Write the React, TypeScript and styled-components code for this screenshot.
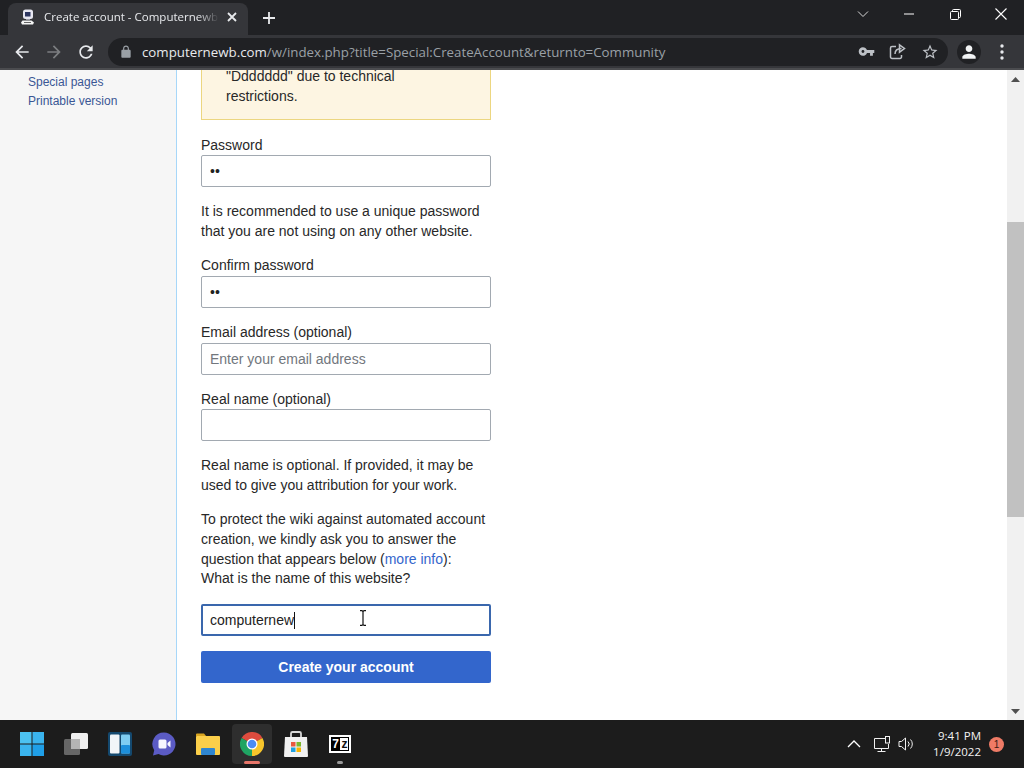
import React from 'react';
import styled, { createGlobalStyle } from 'styled-components';

const GlobalStyle = createGlobalStyle`
  html, body { margin: 0; padding: 0; height: 100%; overflow: hidden; }
  body { font-family: "Liberation Sans", Arial, sans-serif; }
  #root { height: 100%; }
`;

const Screen = styled.div`
  position: relative;
  width: 1024px;
  height: 768px;
  display: flex;
  flex-direction: column;
  overflow: hidden;
`;

/* browser chrome */
const TabStrip = styled.div`
  height: 35px;
  flex: none;
  background: #202124;
  display: flex;
  align-items: flex-end;
  padding-left: 8px;
  color: #fff;
`;

const Tab = styled.div`
  width: 240px;
  height: 32px;
  background: #35363a;
  border-radius: 8px 8px 0 0;
  display: flex;
  align-items: center;
  padding: 0 11px 5px 12px;
  box-sizing: border-box;
  gap: 8px;
`;

const TabTitle = styled.div`
  flex: 1;
  font-family: "Open Sans", sans-serif;
  font-size: 11.5px;
  color: #e8eaed;
  white-space: nowrap;
  overflow: hidden;
  mask-image: linear-gradient(to right, #000 88%, transparent);
`;

const NewTab = styled.div`
  width: 42px;
  display: flex;
  justify-content: center;
  align-self: center;
`;

const WindowControls = styled.div`
  margin-left: auto;
  align-self: flex-start;
  display: flex;
  align-items: center;
  height: 28px;
`;

const WinBtn = styled.div`
  width: 46px;
  height: 28px;
  display: flex;
  align-items: center;
  justify-content: center;
`;

const Toolbar = styled.div`
  height: 35px;
  flex: none;
  box-sizing: border-box;
  background: #35363a;
  border-bottom: 2px solid #4b4c4f;
  display: flex;
  align-items: center;
  padding: 0 20px 0 6px;
`;

const NavBtn = styled.div`
  width: 32px;
  display: flex;
  justify-content: center;
`;

const Omnibox = styled.div`
  flex: 1;
  height: 28px;
  margin: 0 9px 0 6px;
  background: #202124;
  border-radius: 14px;
  display: flex;
  align-items: center;
  padding: 0 6px 0 11px;
  gap: 9px;
`;

const Url = styled.div`
  flex: 1;
  font-family: "Open Sans", sans-serif;
  font-size: 13.3px;
  color: #9aa0a6;
  white-space: nowrap;
  b { font-weight: 400; color: #e8eaed; }
`;

const OmniIcons = styled.div`
  display: flex;
  align-items: center;
  gap: 14px;
  padding-right: 3px;
`;

const Avatar = styled.div`
  width: 24px;
  height: 24px;
  border-radius: 50%;
  background: #202124;
  display: flex;
  align-items: center;
  justify-content: center;
  margin-right: 19px;
`;

/* page */
const Viewport = styled.div`
  flex: 1;
  min-height: 0;
  display: flex;
  background: #fff;
`;

const Sidebar = styled.nav`
  width: 148px;
  flex: none;
  background: #f6f6f6;
  border-right: 1px solid #a7d7f9;
  padding: 3px 0 0 28px;
`;

const SideLink = styled.a`
  display: block;
  font-size: 12px;
  line-height: 19px;
  color: #3a5795;
`;

const Main = styled.main`
  flex: 1;
  padding-left: 24px;
`;

const Form = styled.div`
  width: 290px;
  font-size: 14px;
  line-height: 20px;
  color: #282828;
`;

const WarningBox = styled.div`
  height: 50px;
  box-sizing: border-box;
  background: #fdf5e2;
  border: 1px solid #ecd680;
  border-top: none;
  padding: 0 24px 13px;
  display: flex;
  align-items: flex-end;
  overflow: hidden;
`;

const Label = styled.div<{ $top?: number; $gap?: number }>`
  margin-top: ${p => p.$top ?? 14}px;
  margin-bottom: ${p => p.$gap ?? 0}px;
  height: 20px;
`;

const TextInput = styled.input`
  display: block;
  width: 100%;
  height: 32px;
  box-sizing: border-box;
  padding: 0 8px;
  border: 1px solid #a2a9b1;
  border-radius: 2px;
  background: #fff;
  font: 14px "Liberation Sans", Arial, sans-serif;
  color: #222;
  outline: none;
  &::placeholder { color: #72777d; opacity: 1; }
`;

const FocusedInput = styled.div`
  height: 32px;
  margin-top: 16px;
  box-sizing: border-box;
  padding: 0 7px;
  border: 2px solid #3a67ad;
  border-radius: 2px;
  display: flex;
  align-items: center;
  color: #222;
  span { border-right: 1px solid #111; height: 17px; line-height: 17px; }
`;

const Hint = styled.p`
  margin: 14px 0 0;
`;

const Question = styled.div`
  margin-top: -1px;
`;

const InlineLink = styled.a`
  color: #36c;
`;

const SubmitButton = styled.button`
  display: block;
  width: 100%;
  height: 32px;
  margin-top: 15px;
  border: none;
  border-radius: 2px;
  background: #3366cc;
  color: #fff;
  font: bold 14px "Liberation Sans", Arial, sans-serif;
`;

const Scrollbar = styled.div`
  width: 17px;
  flex: none;
  background: #f1f1f1;
  display: flex;
  flex-direction: column;
  align-items: center;
  justify-content: space-between;
  padding: 7px 0 6px;
  box-sizing: border-box;
`;

const Thumb = styled.div`
  position: absolute;
  top: 222px;
  right: 0;
  width: 17px;
  height: 295px;
  background: #c1c1c1;
`;

const Cursor = styled.svg`
  position: absolute;
  left: 358px;
  top: 610px;
`;

/* taskbar */
const Taskbar = styled.footer`
  height: 48px;
  flex: none;
  background: #1c1c1c;
  display: flex;
  align-items: center;
  padding: 0 20px 0 12px;
  gap: 4px;
`;

const TaskItem = styled.div<{ $active?: boolean; $dot?: string }>`
  position: relative;
  width: 40px;
  height: 40px;
  border-radius: 4px;
  background: ${p => (p.$active ? '#2e2e2e' : 'transparent')};
  display: flex;
  align-items: center;
  justify-content: center;
  &::after {
    content: '';
    display: ${p => (p.$dot ? 'block' : 'none')};
    position: absolute;
    bottom: 0;
    left: 50%;
    transform: translateX(-50%);
    width: ${p => (p.$active ? '16px' : '6px')};
    height: 3px;
    border-radius: 2px;
    background: ${p => p.$dot};
  }
`;

const Tray = styled.div`
  margin-left: auto;
  display: flex;
  align-items: center;
  color: #fff;
`;

const TrayIcons = styled.div`
  display: flex;
  align-items: center;
  gap: 7px;
  margin-right: 19px;
`;

const TrayChevron = styled.svg`
  margin-right: 6px;
`;

const Clock = styled.div`
  font-family: "Open Sans", sans-serif;
  font-size: 11.5px;
  line-height: 16px;
  text-align: right;
  color: #f2f2f2;
`;

const Badge = styled.div`
  width: 15px;
  height: 15px;
  margin-left: 8px;
  border-radius: 50%;
  background: #ef7b66;
  color: #3a1a12;
  font-size: 10px;
  line-height: 15px;
  text-align: center;
`;

const SevenZip = styled.div`
  width: 22px;
  height: 18px;
  box-sizing: border-box;
  background: #fff;
  border: 2px solid #fff;
  outline: 1px solid #000;
  outline-offset: -3px;
  color: #111;
  font: bold 12px/14px "Liberation Sans", Arial, sans-serif;
  display: flex;
  span { flex: 1; text-align: center; }
  span:first-child { background: #000; color: #fff; }
`;

const Glyph = ({ d, size = 20, color = '#e8eaed' }: { d: string; size?: number; color?: string }) => (
  <svg width={size} height={size} viewBox="0 0 24 24" fill={color}><path d={d} /></svg>
);

const icons = {
  back: 'M20 11H7.83l5.59-5.59L12 4l-8 8 8 8 1.41-1.41L7.83 13H20v-2z',
  forward: 'M12 4l-1.41 1.41L16.17 11H4v2h12.17l-5.58 5.59L12 20l8-8z',
  reload: 'M17.65 6.35C16.2 4.9 14.21 4 12 4c-4.42 0-7.99 3.58-7.99 8s3.57 8 7.99 8c3.73 0 6.84-2.55 7.73-6h-2.08c-.82 2.33-3.04 4-5.65 4-3.31 0-6-2.69-6-6s2.69-6 6-6c1.66 0 3.14.69 4.22 1.78L13 11h7V4l-2.35 2.35z',
  lock: 'M18 8h-1V6c0-2.76-2.24-5-5-5S7 3.24 7 6v2H6c-1.1 0-2 .9-2 2v10c0 1.1.9 2 2 2h12c1.1 0 2-.9 2-2V10c0-1.1-.9-2-2-2zM9 6c0-1.66 1.34-3 3-3s3 1.34 3 3v2H9V6z',
  key: 'M12.65 10C11.83 7.67 9.61 6 7 6c-3.31 0-6 2.69-6 6s2.69 6 6 6c2.61 0 4.83-1.67 5.65-4H17v4h4v-4h2v-4H12.65zM7 14c-1.1 0-2-.9-2-2s.9-2 2-2 2 .9 2 2-.9 2-2 2z',
  star: 'M22 9.24l-7.19-.62L12 2 9.19 8.63 2 9.24l5.46 4.73L5.82 21 12 17.27 18.18 21l-1.63-7.03L22 9.24zM12 15.4l-3.76 2.27 1-4.28-3.32-2.88 4.38-.38L12 6.1l1.71 4.04 4.38.38-3.32 2.88 1 4.28L12 15.4z',
  person: 'M12 12c2.21 0 4-1.79 4-4s-1.79-4-4-4-4 1.79-4 4 1.79 4 4 4zm0 2c-2.67 0-8 1.34-8 4v2h16v-2c0-2.66-5.33-4-8-4z',
};

const Favicon = () => (
  <svg width="16" height="16" viewBox="0 0 16 16">
    <rect x="3" y="0.500" width="10" height="9.500" rx="2.500" fill="#e6e6f0" />
    <rect x="5" y="3" width="5.500" height="4.500" fill="#2c3560" />
    <path d="M6 10h4v1H6z" fill="#9a9aa5" />
    <path d="M2.500 11.500h9l2.500 2-1 2H2l-1-2z" fill="#f5f5f5" />
    <path d="M4 13h7v1H4z" fill="#666" />
  </svg>
);

const Share = () => (
  <svg width="18" height="18" viewBox="0 0 18 18" fill="none" stroke="#bdc1c6" strokeWidth="1.500">
    <path d="M7 3.500H3a1.500 1.500 0 0 0-1.500 1.500v9A1.500 1.500 0 0 0 3 15.500h8a1.500 1.500 0 0 0 1.500-1.500v-2" />
    <path d="M6 11c0-4 3-5.500 6.500-5.500M10.500 1.800l5 3.700-5 3.700z" />
  </svg>
);

const Dots = () => (
  <svg width="4" height="16" viewBox="0 0 4 16" fill="#e8eaed">
    <circle cx="2" cy="2" r="1.700" /><circle cx="2" cy="8" r="1.700" /><circle cx="2" cy="14" r="1.700" />
  </svg>
);

const StartIcon = () => (
  <svg width="24" height="24" viewBox="0 0 24 24">
    <rect width="11.500" height="11.500" fill="#4cc2f1" />
    <rect x="12.500" width="11.500" height="11.500" fill="#3ab4ee" />
    <rect y="12.500" width="11.500" height="11.500" fill="#3ab4ee" />
    <rect x="12.500" y="12.500" width="11.500" height="11.500" fill="#1f9fe8" />
  </svg>
);

const TaskViewIcon = () => (
  <svg width="24" height="22" viewBox="0 0 24 22">
    <rect x="7" y="0" width="17" height="16" rx="1.500" fill="#efefef" />
    <rect x="0" y="6" width="16" height="16" rx="1.500" fill="#666" />
    <rect x="7" y="6" width="9" height="10" fill="#b4b4b4" />
  </svg>
);

const WidgetsIcon = () => (
  <svg width="24" height="24" viewBox="0 0 24 24">
    <rect width="24" height="24" rx="2" fill="#14496f" />
    <rect x="2" y="2.500" width="9.500" height="19" rx="1" fill="#f1f5f8" />
    <rect x="13" y="2.500" width="9" height="19" rx="1" fill="#7fcdf2" />
    <rect x="13" y="13" width="9" height="8.500" rx="1" fill="#1d8fdb" />
  </svg>
);

const ChatIcon = () => (
  <svg width="24" height="24" viewBox="0 0 24 24">
    <path d="M12 .5a11.500 11.500 0 1 1-5.500 21.600L1 23.500l1.200-5.300A11.500 11.500 0 0 1 12 .5z" fill="#5b5bc4" />
    <rect x="6.500" y="7.500" width="8" height="9" rx="1.500" fill="#f5f5ff" />
    <path d="M15.500 11l3-2.500v7l-3-2.500z" fill="#f5f5ff" />
  </svg>
);

const FolderIcon = () => (
  <svg width="24" height="22" viewBox="0 0 24 22">
    <path d="M0 1.500A1 1 0 0 1 1 .5h7l2.500 3H0z" fill="#d9a520" />
    <rect y="3" width="24" height="19" rx="1" fill="#fbcf4a" />
    <rect x="5" y="15" width="14" height="7" rx="1" fill="#2f86d0" />
  </svg>
);

const ChromeIcon = () => (
  <svg width="24" height="24" viewBox="0 0 24 24">
    <path d="M12 12L1.600 6A12 12 0 0 1 22.400 6z" fill="#dd4b3e" />
    <path d="M12 12l10.400-6A12 12 0 0 1 12 24z" fill="#f7c52b" />
    <path d="M12 12v12A12 12 0 0 1 1.600 6z" fill="#1fa463" />
    <circle cx="12" cy="12" r="5.500" fill="#fff" />
    <circle cx="12" cy="12" r="4.300" fill="#4a8bf5" />
  </svg>
);

const StoreIcon = () => (
  <svg width="24" height="26" viewBox="0 0 24 26">
    <path d="M7 6V2.500A1.500 1.500 0 0 1 8.500 1h7A1.500 1.500 0 0 1 17 2.500V6" fill="none" stroke="#d8d8d8" strokeWidth="1.800" />
    <path d="M1 6h22l1 19a1 1 0 0 1-1 1H1a1 1 0 0 1-1-1z" fill="#f1f1f1" />
    <rect x="7" y="11" width="4.500" height="4.500" fill="#e9573f" />
    <rect x="12.500" y="11" width="4.500" height="4.500" fill="#7cb82f" />
    <rect x="7" y="16.500" width="4.500" height="4.500" fill="#1fa0e0" />
    <rect x="12.500" y="16.500" width="4.500" height="4.500" fill="#f7b500" />
  </svg>
);

const App = () => (
  <Screen>
    <GlobalStyle />
    <TabStrip>
      <Tab>
        <Favicon />
        <TabTitle>Create account - Computernewb</TabTitle>
        <svg width="10" height="10" viewBox="0 0 10 10" stroke="#e8eaed" strokeWidth="1.800"><path d="M1 1l8 8M9 1l-8 8" /></svg>
      </Tab>
      <NewTab>
        <svg width="12" height="12" viewBox="0 0 12 12" stroke="#e8eaed" strokeWidth="1.800"><path d="M6 0v12M0 6h12" /></svg>
      </NewTab>
      <WindowControls>
        <WinBtn>
          <svg width="12" height="8" viewBox="0 0 12 8" fill="none" stroke="#d8d8d8"><path d="M1 1.500l5 5 5-5" /></svg>
        </WinBtn>
        <WinBtn>
          <svg width="10" height="2" viewBox="0 0 10 2" stroke="#fff"><path d="M0 1h10" /></svg>
        </WinBtn>
        <WinBtn>
          <svg width="11" height="11" viewBox="0 0 11 11" fill="none" stroke="#fff"><rect x=".5" y="2.500" width="8" height="8" rx="1" /><path d="M2.500 2.500v-1a1 1 0 0 1 1-1h6a1 1 0 0 1 1 1v6a1 1 0 0 1-1 1h-1" /></svg>
        </WinBtn>
        <WinBtn>
          <svg width="12" height="12" viewBox="0 0 12 12" stroke="#fff" strokeWidth="1.100"><path d="M.5.500l11 11M11.500.500l-11 11" /></svg>
        </WinBtn>
      </WindowControls>
    </TabStrip>

    <Toolbar>
      <NavBtn><Glyph d={icons.back} /></NavBtn>
      <NavBtn><Glyph d={icons.forward} color="#7c7e81" /></NavBtn>
      <NavBtn><Glyph d={icons.reload} /></NavBtn>
      <Omnibox>
        <Glyph d={icons.lock} size={14} color="#9aa0a6" />
        <Url><b>computernewb.com</b>/w/index.php?title=Special:CreateAccount&amp;returnto=Community</Url>
        <OmniIcons>
          <Glyph d={icons.key} size={17} color="#bdc1c6" />
          <Share />
          <Glyph d={icons.star} size={18} color="#bdc1c6" />
        </OmniIcons>
      </Omnibox>
      <Avatar><Glyph d={icons.person} size={20} color="#f1f3f4" /></Avatar>
      <Dots />
    </Toolbar>

    <Viewport>
      <Sidebar>
        <SideLink>Special pages</SideLink>
        <SideLink>Printable version</SideLink>
      </Sidebar>
      <Main>
        <Form>
          <WarningBox>
            <div>"Ddddddd" due to technical restrictions.</div>
          </WarningBox>
          <Label $top={15}>Password</Label>
          <TextInput type="password" value="aa" readOnly />
          <Hint>It is recommended to use a unique password that you are not using on any other website.</Hint>
          <Label $gap={1}>Confirm password</Label>
          <TextInput type="password" value="aa" readOnly />
          <Label $gap={1}>Email address (optional)</Label>
          <TextInput placeholder="Enter your email address" readOnly />
          <Label>Real name (optional)</Label>
          <TextInput readOnly />
          <Hint>Real name is optional. If provided, it may be used to give you attribution for your work.</Hint>
          <Hint>
            To protect the wiki against automated account creation, we kindly ask you to answer the question that appears below (<InlineLink>more info</InlineLink>):
          </Hint>
          <Question>What is the name of this website?</Question>
          <FocusedInput><span>computernew</span></FocusedInput>
          <SubmitButton>Create your account</SubmitButton>
        </Form>
      </Main>
      <Scrollbar>
        <svg width="9" height="5" viewBox="0 0 9 5" fill="#505050"><path d="M4.500 0L9 5H0z" /></svg>
        <svg width="9" height="5" viewBox="0 0 9 5" fill="#505050"><path d="M0 0h9L4.500 5z" /></svg>
      </Scrollbar>
      <Thumb />
    </Viewport>

    <Taskbar>
      <TaskItem><StartIcon /></TaskItem>
      <TaskItem><TaskViewIcon /></TaskItem>
      <TaskItem><WidgetsIcon /></TaskItem>
      <TaskItem><ChatIcon /></TaskItem>
      <TaskItem><FolderIcon /></TaskItem>
      <TaskItem $active $dot="#e8766a"><ChromeIcon /></TaskItem>
      <TaskItem><StoreIcon /></TaskItem>
      <TaskItem $dot="#9a9a9a"><SevenZip><span>7</span><span>z</span></SevenZip></TaskItem>
      <Tray>
        <TrayIcons>
          <TrayChevron width="14" height="8" viewBox="0 0 14 8" fill="none" stroke="#fff" strokeWidth="1.300"><path d="M1 7l6-6 6 6" /></TrayChevron>
          <svg width="17" height="17" viewBox="0 0 17 17" fill="none" stroke="#f0f0f0"><path d="M11 2.500H.5v10h14V8M7.500 12.500v3M3.500 15.500h8" /><rect x="11.500" y=".5" width="4" height="6.500" /></svg>
          <svg width="16" height="14" viewBox="0 0 16 14" fill="none" stroke="#f0f0f0"><path d="M1 4.500h2.500L7.500 1v12L3.500 9.500H1zM10 4.500a3.500 3.500 0 0 1 0 5M12.500 2.500a6.500 6.500 0 0 1 0 9" /></svg>
        </TrayIcons>
        <Clock>9:41 PM<br />1/9/2022</Clock>
        <Badge>1</Badge>
      </Tray>
    </Taskbar>

    <Cursor width="10" height="16" viewBox="0 0 10 16" fill="none" stroke="#111" strokeWidth="1.200">
      <path d="M2 .6h2l1 1 1-1h2M5 1.600v12.800M2 15.400h2l1-1 1 1h2" />
    </Cursor>
  </Screen>
);

export default App;
